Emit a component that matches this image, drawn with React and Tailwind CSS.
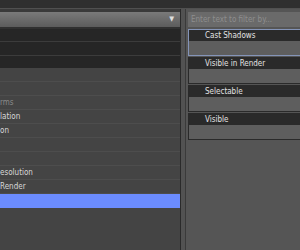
import { } from 'react'

// visible part of each row label (list is scrolled to the right)
const leftRows = [
    { label: '' },
    { label: '' },
    { label: 'rms', dim: true },
    { label: 'lation' },
    { label: 'on' },
    { label: '' },
    { label: '' },
    { label: 'esolution' },
    { label: 'Render' },
    { label: '', selected: true },
]

const attrs = ['Cast Shadows', 'Visible in Render', 'Selectable', 'Visible']

const App = () => {
    return (
        <div className="flex h-[250px] w-[300px] flex-col overflow-hidden bg-[#444] font-['DejaVu_Sans_Condensed','Liberation_Sans',Arial,sans-serif] text-[8px]">
            {/* top strip */}
            <div className="h-[8px] bg-[#2f2f2f]"></div>
            <div className="h-[1px] bg-[#505050]"></div>

            <div className="flex flex-1">
                {/* left list */}
                <div className="flex w-[180px] flex-col bg-[#3a3a3a] pt-[3px]">
                    <div className="flex h-[15px] items-center justify-end bg-gradient-to-b from-[#7a7a7a] to-[#5c5c5c] pr-[6px] text-[7px] text-[#ddd]">
                        ▼
                    </div>
                    <div className="h-[2px] bg-[#303030]"></div>
                    <div className="h-[13px] border-b border-[#3c3c3c] bg-[#262626]"></div>
                    <div className="h-[14px] border-b border-[#3c3c3c] bg-[#262626]"></div>
                    <div className="h-[12px] bg-[#262626]"></div>
                    <div className="flex flex-1 flex-col bg-[#444]">
                        {leftRows.map((r, i) => (
                            <div
                                key={i}
                                className={
                                    r.selected
                                        ? 'flex h-[14px] items-center bg-[#6b8cff]'
                                        : 'flex h-[14px] items-center border-b border-[#4d4d4d]'
                                }
                            >
                                {r.label && (
                                    <span className={r.dim ? 'pt-[1px] text-[#8a8a8a]' : 'pt-[1px] text-[#d8d8d8]'}>
                                        {r.label}
                                    </span>
                                )}
                            </div>
                        ))}
                    </div>
                </div>

                {/* splitter */}
                <div className="flex w-[8px] bg-[#4a4a4a]">
                    <div className="w-[1px] bg-[#2a2a2a]"></div>
                    <div className="w-[4px] bg-[#525252]"></div>
                    <div className="w-[1px] bg-[#3a3a3a]"></div>
                    <div className="w-[2px] bg-[#555]"></div>
                </div>

                {/* right attribute panel */}
                <div className="flex flex-1 flex-col bg-[#555] pt-[3px]">
                    <div className="flex h-[15px] items-center bg-[#6a6a6a] pl-[3px] text-[#8e8e8e]">
                        Enter text to filter by...
                    </div>
                    <div className="h-[2px]"></div>
                    {attrs.map((a, i) => (
                        <div
                            key={a}
                            className={
                                i === 0
                                    ? 'mb-[1px] flex flex-col border border-r-0 border-[#8494b8]'
                                    : 'mb-[1px] flex flex-col border border-r-0 border-[#2a2a2a]'
                            }
                        >
                            <div className="flex h-[11px] items-center bg-[#2a2a2a] pl-[16px] text-[#e4e4e4]">
                                {a}
                            </div>
                            <div className="h-[14px] bg-[#5e5e5e]"></div>
                        </div>
                    ))}
                </div>
            </div>
        </div>
    )
}

export default App
